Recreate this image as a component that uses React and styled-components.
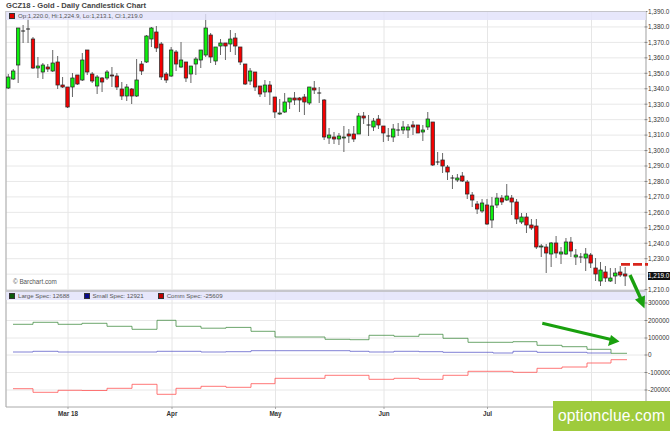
import React from "react";
import styled, { createGlobalStyle } from "styled-components";

const Global = createGlobalStyle`
  html, body { margin: 0; padding: 0; background: #fff; }
  #root { width: 670px; height: 431px; }
`;

const Page = styled.div`
  position: relative;
  width: 670px;
  height: 431px;
  overflow: hidden;
  background: #fff;
  font-family: "Liberation Sans", Arial, sans-serif;
`;
const Title = styled.h1`
  margin: 0;
  height: 11px;
  padding: 1px 0 0 6px;
  box-sizing: border-box;
  font-size: 7.6px;
  line-height: 9px;
  font-weight: 700;
  color: #444;
`;
const Panel = styled.section`
  position: relative;
  width: 670px;
  height: ${(p) => p.$height}px;
`;
const PlotSvg = styled.svg`
  display: block;
  overflow: visible;
`;
const LegendBar = styled.div`
  position: absolute;
  left: 6px;
  top: ${(p) => p.$top}px;
  width: 640px;
  height: ${(p) => p.$h}px;
  box-sizing: border-box;
  padding-left: 3px;
  display: flex;
  align-items: center;
  gap: ${(p) => p.$gap || 0}px;
  background: rgba(226, 226, 250, 0.82);
  border-top: ${(p) => p.$rule}px solid #c6c6cc;
`;
const LegendItem = styled.span`
  display: flex;
  align-items: center;
  gap: 3px;
  font-size: 6.1px;
  line-height: 8px;
  color: #555;
  white-space: nowrap;
`;
const Swatch = styled.i`
  display: block;
  width: 4px;
  height: 4px;
  background: ${(p) => p.$color};
  border: 0.5px solid #333;
`;
const Credit = styled.span`
  position: absolute;
  left: 13px;
  top: 267px;
  font-size: 6.3px;
  line-height: 8px;
  color: #555;
`;
const PriceTag = styled.span`
  position: absolute;
  left: 648px;
  top: 261px;
  width: 22px;
  height: 8px;
  background: #111;
  color: #fff;
  font-size: 6.4px;
  line-height: 8px;
  white-space: nowrap;
`;
const Annotations = styled.svg`
  position: absolute;
  left: 0;
  top: 0;
  pointer-events: none;
`;
const Watermark = styled.div`
  position: absolute;
  left: 553px;
  top: 401px;
  width: 117px;
  height: 30px;
  display: flex;
  align-items: center;
  justify-content: center;
  background: #9ecb3c;
  color: #fff;
  font-size: 15.6px;
  letter-spacing: 0.01em;
`;

/* [bodyTop, bodyBottom, wickTop, wickBottom, kind] g=green r=red d=doji */
const candles = [
  [77,88,74,89,"g"],[71,79,69,80,"g"],[28,65,28,83,"g"],[31,31,25,43,"d"],[29,29,18,43,"d"],
  [39,68,37,69,"r"],[66,68,57,78,"g"],[65,72,63,79,"g"],[67,69,64,72,"r"],[63,71,50,72,"g"],
  [62,85,56,89,"r"],[85,87,77,88,"r"],[87,107,87,108,"r"],[78,87,73,97,"g"],[75,84,75,85,"r"],
  [60,80,53,81,"g"],[50,72,50,75,"r"],[74,81,72,83,"r"],[77,86,75,94,"g"],[78,82,77,92,"r"],
  [72,78,70,80,"g"],[75,76,67,87,"r"],[76,87,73,90,"r"],[89,96,82,100,"r"],[87,96,84,101,"g"],
  [89,96,88,104,"r"],[80,96,59,97,"g"],[64,71,61,75,"r"],[36,62,35,63,"g"],[28,39,27,47,"g"],
  [32,48,26,52,"r"],[44,77,42,80,"r"],[74,80,72,83,"r"],[50,76,47,77,"g"],[52,64,50,71,"r"],
  [60,67,42,68,"g"],[62,78,62,82,"r"],[66,74,66,83,"g"],[59,64,57,75,"g"],[50,60,50,68,"g"],
  [28,55,14,57,"g"],[35,57,33,63,"r"],[47,61,47,65,"g"],[43,46,39,55,"g"],[43,46,43,60,"r"],
  [39,44,30,52,"g"],[38,46,33,55,"r"],[47,62,47,65,"r"],[64,84,64,85,"r"],[71,81,68,85,"g"],
  [72,87,72,91,"r"],[86,94,86,97,"r"],[85,92,80,97,"g"],[85,92,81,105,"r"],[97,112,97,118,"r"],
  [113,114,99,115,"g"],[102,112,93,113,"g"],[98,102,98,109,"g"],[98,100,92,105,"r"],[98,100,97,112,"r"],
  [97,102,94,115,"r"],[87,103,87,105,"g"],[88,90,81,94,"r"],[93,93,87,103,"d"],[100,137,99,140,"r"],
  [135,138,128,144,"g"],[137,139,132,144,"r"],[136,139,133,145,"g"],[137,138,126,152,"g"],[134,136,129,143,"r"],
  [134,139,126,142,"r"],[116,134,113,134,"g"],[116,118,112,124,"r"],[125,125,115,136,"d"],[121,127,118,131,"g"],
  [119,125,115,129,"r"],[126,133,126,142,"r"],[136,136,128,141,"d"],[129,137,124,142,"g"],[130,130,123,136,"d"],
  [127,130,121,134,"g"],[127,130,124,138,"g"],[125,127,121,135,"r"],[125,133,125,133,"r"],[130,132,125,141,"g"],
  [119,127,112,130,"g"],[122,165,122,166,"r"],[162,162,152,165,"d"],[160,166,153,173,"r"],[167,172,165,180,"r"],
  [178,178,175,189,"d"],[178,180,174,182,"g"],[176,181,172,182,"r"],[182,194,180,199,"r"],[195,200,192,207,"r"],
  [204,209,201,214,"r"],[203,211,199,213,"g"],[205,224,199,225,"r"],[206,220,197,228,"g"],[198,205,193,208,"g"],
  [198,202,195,205,"r"],[196,200,184,201,"g"],[198,202,195,215,"r"],[202,219,199,224,"r"],[217,222,213,224,"g"],
  [217,225,213,233,"r"],[225,228,219,230,"r"],[226,247,219,249,"r"],[246,247,244,257,"g"],[247,253,244,273,"r"],
  [243,254,242,267,"g"],[243,253,236,258,"r"],[252,254,247,264,"g"],[242,254,238,255,"g"],[242,251,237,257,"r"],
  [255,257,249,265,"g"],[257,257,253,263,"d"],[254,258,248,271,"g"],[255,263,253,268,"r"],[268,274,258,281,"r"],
  [270,281,262,286,"g"],[272,278,266,282,"r"],[278,281,268,282,"g"],[273,276,268,284,"g"],[272,275,266,277,"r"],
  [274,276,267,286,"r"],
];
const candleX = (i) => 8.3 + i * 4.935;

const priceLabels = ["1,390.0","1,380.0","1,370.0","1,360.0","1,350.0","1,340.0","1,330.0","1,320.0","1,310.0","1,300.0","1,290.0","1,280.0","1,270.0","1,260.0","1,250.0","1,240.0","1,230.0","1,220.0","1,210.0"];
const priceY = (i) => 11.5 + i * 15.45;
const specTicks = [[303,"300000"],[320.5,"200000"],[338,"100000"],[355,"0"],[372.5,"-100000"],[390,"-200000"]];
const gridX = [68, 172, 275.5, 384, 487.5, 591.5];
const months = [[68,"Mar 18"],[172,"Apr"],[275.5,"May"],[384,"Jun"],[487.5,"Jul"]];

/* weekly steps: [xEnd, y] */
const stepPath = (x0, steps) => {
  let d = `M${x0} ${steps[0][1]}`;
  steps.forEach(([x, y]) => { d += `V${y}H${x}`; });
  return d;
};
const large = [[33,324.3],[58,322.3],[82,324.3],[107,323.3],[132,326.3],[157,329.3],[176,320.3],[201,326.3],[226,328.2],[251,327.4],[275,331.3],[325,337],[350,339.3],[369,339.7],[394,335.3],[419,336.3],[443,334.3],[468,338.3],[513,342.3],[537,341.7],[562,345.3],[587,346.7],[611,349.3],[627,353.3]];
const small = [[33,352],[58,351.3],[157,352],[201,351.3],[226,352],[251,351.7],[350,350.7],[369,351.3],[394,352],[419,351.3],[443,351.7],[493,352.3],[513,353],[537,351.3],[587,352.3],[611,353]];
const comm = [[33,388.7],[58,392.3],[82,390.3],[107,390.5],[132,388.3],[157,384.3],[176,394.3],[201,388.3],[226,386.3],[251,387.3],[275,383.7],[325,378.3],[369,375.3],[394,379.3],[419,378.3],[443,379.3],[468,375.3],[513,371.3],[537,372.3],[562,368.3],[587,367],[611,363],[627,359.7]];

const Candle = ({ c, i }) => {
  const [top, bottom, wt, wb, kind] = c;
  const x = candleX(i);
  return (
    <g>
      <line x1={x} x2={x} y1={wt} y2={wb} stroke="#555" strokeWidth="0.9" />
      {kind === "d" ? (
        <line x1={x - 2} x2={x + 2} y1={top} y2={top} stroke="#111" strokeWidth="0.9" />
      ) : (
        <rect
          x={x - 1.7}
          y={top}
          width={3.4}
          height={Math.max(bottom - top, 1)}
          fill={kind === "g" ? "#0df00d" : "#f50000"}
          stroke="#2a2a2a"
          strokeWidth="0.75"
        />
      )}
    </g>
  );
};

const VGrid = ({ y1, y2 }) =>
  gridX.map((x) => <line key={x} x1={x} x2={x} y1={y1} y2={y2} stroke="#e6e6e6" strokeWidth="1" />);

const AxisLabel = ({ y, children }) => (
  <g>
    <line x1="644.5" x2="647.5" y1={y} y2={y} stroke="#666" strokeWidth="0.7" />
    <text x="648" y={y + 2.3} fontSize="6.4" fill="#333" fontFamily="'Liberation Sans', Arial, sans-serif">{children}</text>
  </g>
);

export default function App() {
  return (
    <Page>
      <Global />
      <Title>GCZ18 - Gold - Daily Candlestick Chart</Title>

      <Panel $height={279}>
        <PlotSvg width="670" height="279" viewBox="0 11 670 279">
          {priceLabels.map((_, i) => (
            <line key={i} x1="6" x2="646" y1={priceY(i)} y2={priceY(i)} stroke="#e8e8e8" strokeWidth="1" />
          ))}
          <VGrid y1={11} y2={290} />
          <line x1="6" x2="6" y1="11" y2="290" stroke="#bbb" strokeWidth="1.4" />
          <line x1="646" x2="646" y1="11" y2="290" stroke="#c4c4c4" strokeWidth="1.6" />
          {candles.map((c, i) => <Candle key={i} c={c} i={i} />)}
          {priceLabels.map((t, i) =>
            i === 17 ? null : <AxisLabel key={t} y={priceY(i)}>{t}</AxisLabel>
          )}
        </PlotSvg>
        <LegendBar $top={0} $h={9} $rule={1}>
          <LegendItem><Swatch $color="#e00000" />Op:1,220.0, Hi:1,224.9, Lo:1,213.1, Cl:1,219.0</LegendItem>
        </LegendBar>
        <Credit>© Barchart.com</Credit>
        <PriceTag>1,219.0</PriceTag>
      </Panel>

      <Panel $height={141}>
        <PlotSvg width="670" height="141" viewBox="0 290 670 141">
          {specTicks.map(([y]) => (
            <line key={y} x1="6" x2="646" y1={y} y2={y} stroke="#e8e8e8" strokeWidth="1" />
          ))}
          <VGrid y1={290} y2={407} />
          <line x1="6" x2="6" y1="290" y2="407" stroke="#bbb" strokeWidth="1.4" />
          <line x1="646" x2="646" y1="290" y2="407" stroke="#c4c4c4" strokeWidth="1.6" />
          <line x1="6" x2="646" y1="407" y2="407" stroke="#aaa" strokeWidth="1" />
          <path d={stepPath(13, large)} fill="none" stroke="#3f8a3f" strokeWidth="0.9" opacity="0.85" />
          <path d={stepPath(13, small)} fill="none" stroke="#5a5ac8" strokeWidth="0.9" opacity="0.85" />
          <path d={stepPath(13, comm)} fill="none" stroke="#ff5555" strokeWidth="0.9" opacity="0.9" />
          {specTicks.map(([y, t]) => <AxisLabel key={t} y={y}>{t}</AxisLabel>)}
          {months.map(([x, t]) => (
            <g key={t}>
              <line x1={x} x2={x} y1="407" y2="409" stroke="#888" strokeWidth="0.7" />
              <text x={x} y="415.5" textAnchor="middle" fontSize="6.3" fontWeight="700" fill="#333" fontFamily="'Liberation Sans', Arial, sans-serif">{t}</text>
            </g>
          ))}
        </PlotSvg>
        <LegendBar $top={0} $h={10} $rule={2} $gap={14}>
          <LegendItem><Swatch $color="#0a5a0a" />Large Spec: 12688</LegendItem>
          <LegendItem><Swatch $color="#0a0a8a" />Small Spec: 12921</LegendItem>
          <LegendItem><Swatch $color="#c00000" />Comm Spec: -25609</LegendItem>
        </LegendBar>
      </Panel>

      <Annotations width="670" height="431" viewBox="0 0 670 431">
        <line x1="621" x2="648" y1="264.4" y2="264.4" stroke="#d8261c" strokeWidth="2.6" strokeDasharray="9 3" />
        <path d="M630 275 L640.5 298" stroke="#19a00e" strokeWidth="3.4" fill="none" />
        <path d="M644.5 308.5 L635 299.5 L645 295.5 Z" fill="#19a00e" />
        <path d="M542.3 323.3 L611 339.5" stroke="#19a00e" strokeWidth="3" fill="none" />
        <path d="M619.5 341.5 L608 346 L611 335 Z" fill="#19a00e" />
      </Annotations>

      <Watermark>optionclue.com</Watermark>
    </Page>
  );
}
